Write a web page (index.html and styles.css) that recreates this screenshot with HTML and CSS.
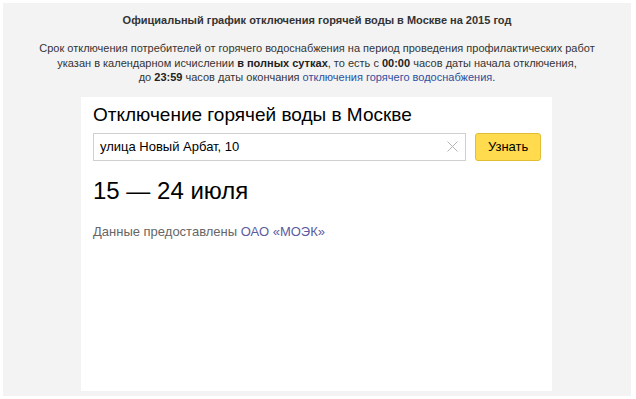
FILE: index.html
```html
<!DOCTYPE html>
<html lang="ru">
<head>
    <meta charset="UTF-8">
    <meta name="viewport" content="width=device-width, initial-scale=1.0">
    <title>Отключение горячей воды в Москве</title>
    <link rel="stylesheet" href="styles.css">
</head>
<body>
    <div class="panel">
        <h1>Официальный график отключения горячей воды в Москве на 2015 год</h1>
        <p class="note">
            Срок отключения потребителей от горячего водоснабжения на период проведения профилактических работ<br>
            указан в календарном исчислении <b>в полных сутках</b>, то есть с <b>00:00</b> часов даты начала отключения,<br>
            до <b>23:59</b> часов даты окончания <a href="#">отключения горячего водоснабжения</a>.
        </p>
        <div class="card">
            <h2>Отключение горячей воды в Москве</h2>
            <form class="search">
                <div class="field">
                    <input type="text" value="улица Новый Арбат, 10">
                    <span class="clear">
                        <svg width="11" height="11" viewBox="0 0 11 11">
                            <path d="M0.5 0.5 L10.5 10.5 M10.5 0.5 L0.5 10.5" stroke="#b3b3b3" stroke-width="1" fill="none"/>
                        </svg>
                    </span>
                </div>
                <button type="button">Узнать</button>
            </form>
            <div class="result">15 — 24 июля</div>
            <div class="source">Данные предоставлены <a href="#" class="visited">ОАО «МОЭК»</a></div>
        </div>
    </div>
</body>
</html>
```

FILE: styles.css
```css
body {
    margin: 0;
    padding: 3px 5px 4px 3px;
    font-family: "Liberation Sans", Arial, sans-serif;
    background-color: #fff;
    color: #333;
}
.panel {
    height: 383px;
    padding-top: 10px;
    background-color: #f3f3f3;
}
h1 {
    margin: 0;
    font-size: 11px;
    line-height: 15px;
    text-align: center;
    color: #333;
}
.note {
    margin: 13px 0 0;
    font-size: 11px;
    line-height: 14.5px;
    text-align: center;
    color: #333;
}
.note b {
    color: #222;
}
a {
    color: #2d4fa0;
    text-decoration: none;
}
.card {
    box-sizing: border-box;
    width: 471px;
    height: 294px;
    margin: 12px 0 0 78px;
    padding: 6px 11px 0 12px;
    background-color: #fff;
}
h2 {
    margin: 0;
    font-size: 19px;
    line-height: 23px;
    font-weight: normal;
    color: #000;
}
.search {
    display: flex;
    gap: 9px;
    margin-top: 7px;
}
.field {
    position: relative;
    width: 374px;
}
.field input {
    box-sizing: border-box;
    width: 100%;
    height: 28px;
    margin: 0;
    padding: 0 30px 0 6px;
    border: 1px solid #d0d0d0;
    font-family: inherit;
    font-size: 13px;
    color: #000;
    outline: none;
}
.clear {
    position: absolute;
    top: 8px;
    right: 8px;
    line-height: 0;
}
button {
    width: 66px;
    height: 28px;
    padding: 0;
    border: 1px solid #e0bd33;
    border-radius: 3px;
    background-color: #ffdb4d;
    font-family: inherit;
    font-size: 13px;
    color: #000;
}
.result {
    margin-top: 16px;
    font-size: 24px;
    line-height: 28px;
    color: #000;
}
.source {
    margin-top: 19px;
    font-size: 13px;
    line-height: 16px;
    color: #666;
}
.source .visited {
    color: #5b5ba0;
}
```
